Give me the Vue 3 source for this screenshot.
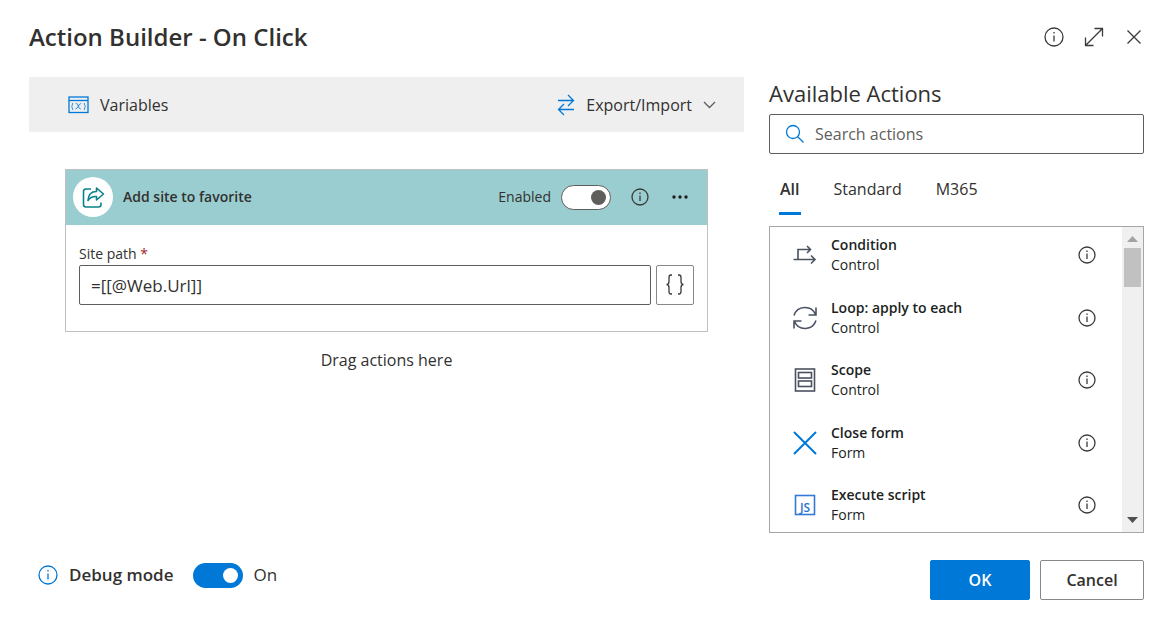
<script setup>
import { ref } from 'vue'

const sitePath = ref('=[[@Web.Url]]')
const search = ref('')
const enabled = ref(true)
const debug = ref(true)
const tabs = ['All', 'Standard', 'M365']
const activeTab = ref('All')
const actions = [
  { name: 'Condition', group: 'Control', icon: 'condition' },
  { name: 'Loop: apply to each', group: 'Control', icon: 'loop' },
  { name: 'Scope', group: 'Control', icon: 'scope' },
  { name: 'Close form', group: 'Form', icon: 'close' },
  { name: 'Execute script', group: 'Form', icon: 'script' },
]
</script>

<template>
  <main class="dialog">
    <header class="titlebar">
      <h1>Action Builder - On Click</h1>
      <div class="window-tools">
        <button class="icon-btn" aria-label="Information">
          <svg width="20" height="20" viewBox="0 0 20 20" class="line"><circle cx="10" cy="10" r="9" /><path d="M10 8.500v6M10 5v1.500" /></svg>
        </button>
        <button class="icon-btn" aria-label="Expand">
          <svg width="20" height="20" viewBox="0 0 20 20" class="line"><path d="M1.500 18.500l17-17M10.500 1.500h8v8M1.500 10.500v8h8" /></svg>
        </button>
        <button class="icon-btn" aria-label="Close">
          <svg width="20" height="20" viewBox="0 0 20 20" class="line"><path d="M3.500 3.500l13 13M16.500 3.500l-13 13" /></svg>
        </button>
      </div>
    </header>

    <div class="columns">
      <section class="builder">
        <div class="toolbar">
          <button class="tool">
            <svg width="21" height="18" viewBox="0 0 21 18" class="line blue">
              <rect x="1" y="1" width="19" height="15.500" /><path d="M1 4.500h19" />
              <path d="M4.800 7q-2 3.500 0 7M16.200 7q2 3.500 0 7M7.800 7.500q2-.5 2.500 2.500t2.500 3M13.200 7.500q-1.500 0-2.900 2.700t-2.900 2.800" stroke-width="0.8" />
            </svg>
            <span>Variables</span>
          </button>
          <button class="tool">
            <svg width="18" height="22" viewBox="0 0 18 22" class="line blue"><path d="M1 6.500h15.500M11 1l5.500 5.500L11 12M17 15.500H1.500M7 10l-5.500 5.500L7 21" /></svg>
            <span>Export/Import</span>
            <svg width="13" height="8" viewBox="0 0 13 8" class="line caret"><path d="M1 1l5.500 5.500L12 1" /></svg>
          </button>
        </div>

        <article class="card">
          <div class="card-head">
            <span class="badge">
              <svg width="24" height="24" viewBox="0 0 24 24" class="line teal">
                <path d="M10 4H5Q2.500 4 2.500 6.500v13Q2.500 22 5 22h12.500q2.500 0 2.500-2.500V17.500" />
                <path d="M7 15.500Q7.500 6.500 15.500 6.500V3l7 6-7 6v-3.500Q10 11 7 15.500z" />
              </svg>
            </span>
            <h2>Add site to favorite</h2>
            <label for="enabled">Enabled</label>
            <input id="enabled" v-model="enabled" class="switch outline" type="checkbox" role="switch" />
            <button class="icon-btn card-info" aria-label="Action information">
              <svg width="18" height="18" viewBox="0 0 18 18" class="line"><circle cx="9" cy="9" r="8" /><path d="M9 7.500v5.500M9 4.500v1.500" /></svg>
            </button>
            <button class="icon-btn more" aria-label="More">
              <svg width="18" height="18" viewBox="0 0 18 18"><circle cx="3" cy="9" r="1.700" /><circle cx="9" cy="9" r="1.700" /><circle cx="15" cy="9" r="1.700" /></svg>
            </button>
          </div>
          <div class="card-body">
            <label for="path">Site path <span class="required">*</span></label>
            <div class="field">
              <input id="path" v-model="sitePath" type="text" />
              <button class="braces" aria-label="Insert expression">
                <svg width="20" height="22" viewBox="0 0 20 22" class="line"><path d="M7 1H6Q4 1 4 3.500v4Q4 10.500 1.500 10.500 4 10.500 4 13.500v4Q4 20 6 20h1M13 1h1q2 0 2 2.500v4q0 3 2.500 3-2.500 0-2.500 3v4q0 2.500-2 2.500h-1" /></svg>
              </button>
            </div>
          </div>
        </article>
        <p class="drop">Drag actions here</p>
      </section>

      <aside class="library">
        <h2>Available Actions</h2>
        <div class="search">
          <svg width="20" height="20" viewBox="0 0 20 20" class="line blue"><circle cx="8" cy="8" r="6.500" /><path d="M12.500 12.500l6 6" /></svg>
          <input v-model="search" type="text" placeholder="Search actions" aria-label="Search actions" />
        </div>
        <nav class="tabs" role="tablist">
          <button v-for="tab in tabs" :key="tab" role="tab" :aria-selected="tab === activeTab" :class="{ active: tab === activeTab }" @click="activeTab = tab">{{ tab }}</button>
        </nav>
        <div class="list-box">
          <ul>
            <li v-for="action in actions" :key="action.name">
              <svg width="26" height="26" viewBox="0 0 26 26" class="line glyph">
                <path v-if="action.icon === 'condition'" d="M1.500 17.500H23M19 13.500l4 4-4 4M6 17.500v-10h12.500M15 4l3.500 3.500L15 11" />
                <path v-else-if="action.icon === 'loop'" d="M2 10.500A11.500 11.500 0 0 1 23.500 9.500M24 2.500v7.500h-7.500M24 15.500A11.500 11.500 0 0 1 2.500 16.500M2 23.500V16h7.500" />
                <g v-else-if="action.icon === 'scope'"><rect x="3.500" y="2" width="19" height="22" /><rect x="6.500" y="5.500" width="13" height="5.500" /><rect x="6.500" y="14" width="13" height="5.500" /></g>
                <path v-else-if="action.icon === 'close'" class="cross" d="M2 2l22 22M24 2L2 24" />
                <g v-else class="script"><rect x="3.500" y="3.500" width="19" height="19" /><text x="8" y="20">JS</text></g>
              </svg>
              <div class="names"><strong>{{ action.name }}</strong><span>{{ action.group }}</span></div>
              <button class="icon-btn" :aria-label="'About ' + action.name">
                <svg width="18" height="18" viewBox="0 0 18 18" class="line"><circle cx="9" cy="9" r="8" /><path d="M9 7.500v5.500M9 4.500v1.500" /></svg>
              </button>
            </li>
          </ul>
          <div class="scrollbar" aria-hidden="true">
            <svg width="11" height="6" viewBox="0 0 11 6" class="up"><path d="M5.500 0L11 6H0z" /></svg>
            <div class="thumb"></div>
            <svg width="11" height="6" viewBox="0 0 11 6" class="down"><path d="M0 0h11L5.500 6z" /></svg>
          </div>
        </div>
      </aside>
    </div>

    <footer class="footer">
      <div class="debug">
        <svg width="20" height="20" viewBox="0 0 20 20" class="line blue"><circle cx="10" cy="10" r="9" /><path d="M10 8.500v6M10 5v1.500" /></svg>
        <label for="debug">Debug mode</label>
        <input id="debug" v-model="debug" class="switch" type="checkbox" role="switch" />
        <span>{{ debug ? 'On' : 'Off' }}</span>
      </div>
      <button class="action primary">OK</button>
      <button class="action">Cancel</button>
    </footer>
  </main>
</template>

<style>
body { margin: 0; background: #fff; }
</style>

<style scoped>
* { box-sizing: border-box; }
.dialog {
  display: flex; flex-direction: column; min-height: 100vh; padding: 0 27px 34px 29px;
  font: 16px/24px "Open Sans", "Noto Sans", sans-serif; color: #323130; background: #fff;
}
h1, h2, p, ul { margin: 0; padding: 0; }
button, input { font: inherit; color: inherit; }
button { padding: 0; border: 0; background: none; cursor: pointer; }
svg { display: block; flex: none; }
.line { fill: none; stroke: #3b3a39; stroke-width: 1.3; }
.blue { stroke: #0078d7; }
.teal { stroke: #0a8288; stroke-width: 1.6; stroke-linejoin: round; }
.titlebar { display: flex; align-items: center; justify-content: space-between; height: 77px; padding-bottom: 3px; }
h1 { font-size: 24px; line-height: 32px; font-weight: 600; }
.window-tools { display: flex; gap: 20px; }
.columns { flex: 1; display: grid; grid-template-columns: minmax(0, 1fr) 375px; column-gap: 25px; }
.toolbar { display: flex; justify-content: space-between; height: 55px; padding: 0 28px 0 39px; background: #efefef; }
.tool { display: flex; align-items: center; gap: 11px; }
.caret { stroke: #605e5c; }
.card { margin: 37px 36px 0; border: 1px solid #c0c0c0; }
.card-head { display: flex; align-items: center; height: 55px; padding: 0 18px 1px 7px; background: #9acdcf; }
.badge { display: grid; place-items: center; width: 40px; height: 40px; border-radius: 50%; background: #fff; }
.card-head h2 { flex: 1; margin-left: 10px; font-size: 14px; font-weight: 600; line-height: 20px; }
.card-head label { font-size: 14px; margin-right: 10px; }
.card-info { margin: 0 22px 0 20px; }
.more { fill: #201f1e; }
.switch {
  appearance: none; display: flex; align-items: center; justify-content: flex-end; width: 50px; height: 25px;
  margin: 0; padding: 0 5px; border-radius: 13px; background: #0078d7; cursor: pointer;
}
.switch::before { content: ""; width: 15px; height: 15px; border-radius: 50%; background: #fff; }
.switch:not(:checked) { justify-content: flex-start; }
.outline { padding: 0 4px; border: 1px solid #605e5c; background: #fff; }
.outline::before { background: #605e5c; }
.card-body { padding: 18px 13px 26px; }
.card-body label { display: block; font-size: 14px; line-height: 22px; }
.required { color: #a4262c; }
.field { display: flex; gap: 5px; }
.field input { flex: 1; min-width: 0; height: 40px; padding: 0 11px; border: 1px solid #605e5c; border-radius: 2px; font-size: 17px; background: #fff; }
.braces { display: grid; place-items: center; width: 38px; height: 40px; border: 1px solid #8a8886; border-radius: 2px; }
.drop { margin-top: 16px; text-align: center; }
.library h2 { height: 37px; font-size: 22px; line-height: 32px; font-weight: 400; }
.search { display: flex; align-items: center; gap: 10px; height: 40px; padding: 0 15px; border: 1px solid #605e5c; border-radius: 2px; }
.search input { flex: 1; min-width: 0; padding: 0; border: 0; outline: 0; background: none; }
.search input::placeholder { color: #605e5c; opacity: 1; }
.tabs { display: flex; gap: 12px; height: 61px; margin-bottom: 11px; }
.tabs button { position: relative; height: 61px; padding: 8px 11px 0; }
.tabs .active { font-weight: 600; }
.tabs .active::after { content: ""; position: absolute; left: 10px; right: 10px; bottom: 0; height: 3px; background: #0078d7; }
.list-box { display: flex; height: 307px; border: 1px solid #a6a6a6; color: #201f1e; }
ul { flex: 1; display: flex; flex-direction: column; justify-content: space-between; padding: 8px 26px 7px 22px; overflow: hidden; list-style: none; }
li { display: flex; align-items: center; height: 40px; }
.glyph { stroke: #4a5260; stroke-width: 1.6; }
.cross { stroke: #0078d7; stroke-width: 2; }
.script { stroke: #3579d8; }
.script text { font: 600 12px "Open Sans", sans-serif; fill: #2b74d0; stroke: none; }
.names { flex: 1; display: flex; flex-direction: column; margin-left: 13px; font-size: 14px; line-height: 20px; }
.names strong { font-weight: 600; }
.scrollbar { display: flex; flex-direction: column; align-items: center; width: 21px; padding: 9px 0; background: #f0f0f0; }
.thumb { width: 17px; height: 39px; margin: 6px 0 auto; background: #c1c1c1; }
.up { fill: #a3a3a3; }
.down { fill: #505050; }
.footer { display: flex; align-items: center; gap: 10px; margin-top: 27px; font-size: 17px; }
.debug { flex: 1; display: flex; align-items: center; height: 30px; margin: 0 0 10px 9px; }
.debug label { margin: 0 20px 0 11px; font-weight: 600; }
.debug span { margin-left: 10px; }
.action { width: 104px; height: 40px; border: 1px solid #8a8886; border-radius: 2px; font-size: 16px; font-weight: 600; background: #fff; }
.primary { width: 100px; border-color: #0078d7; color: #fff; background: #0078d7; }
</style>
